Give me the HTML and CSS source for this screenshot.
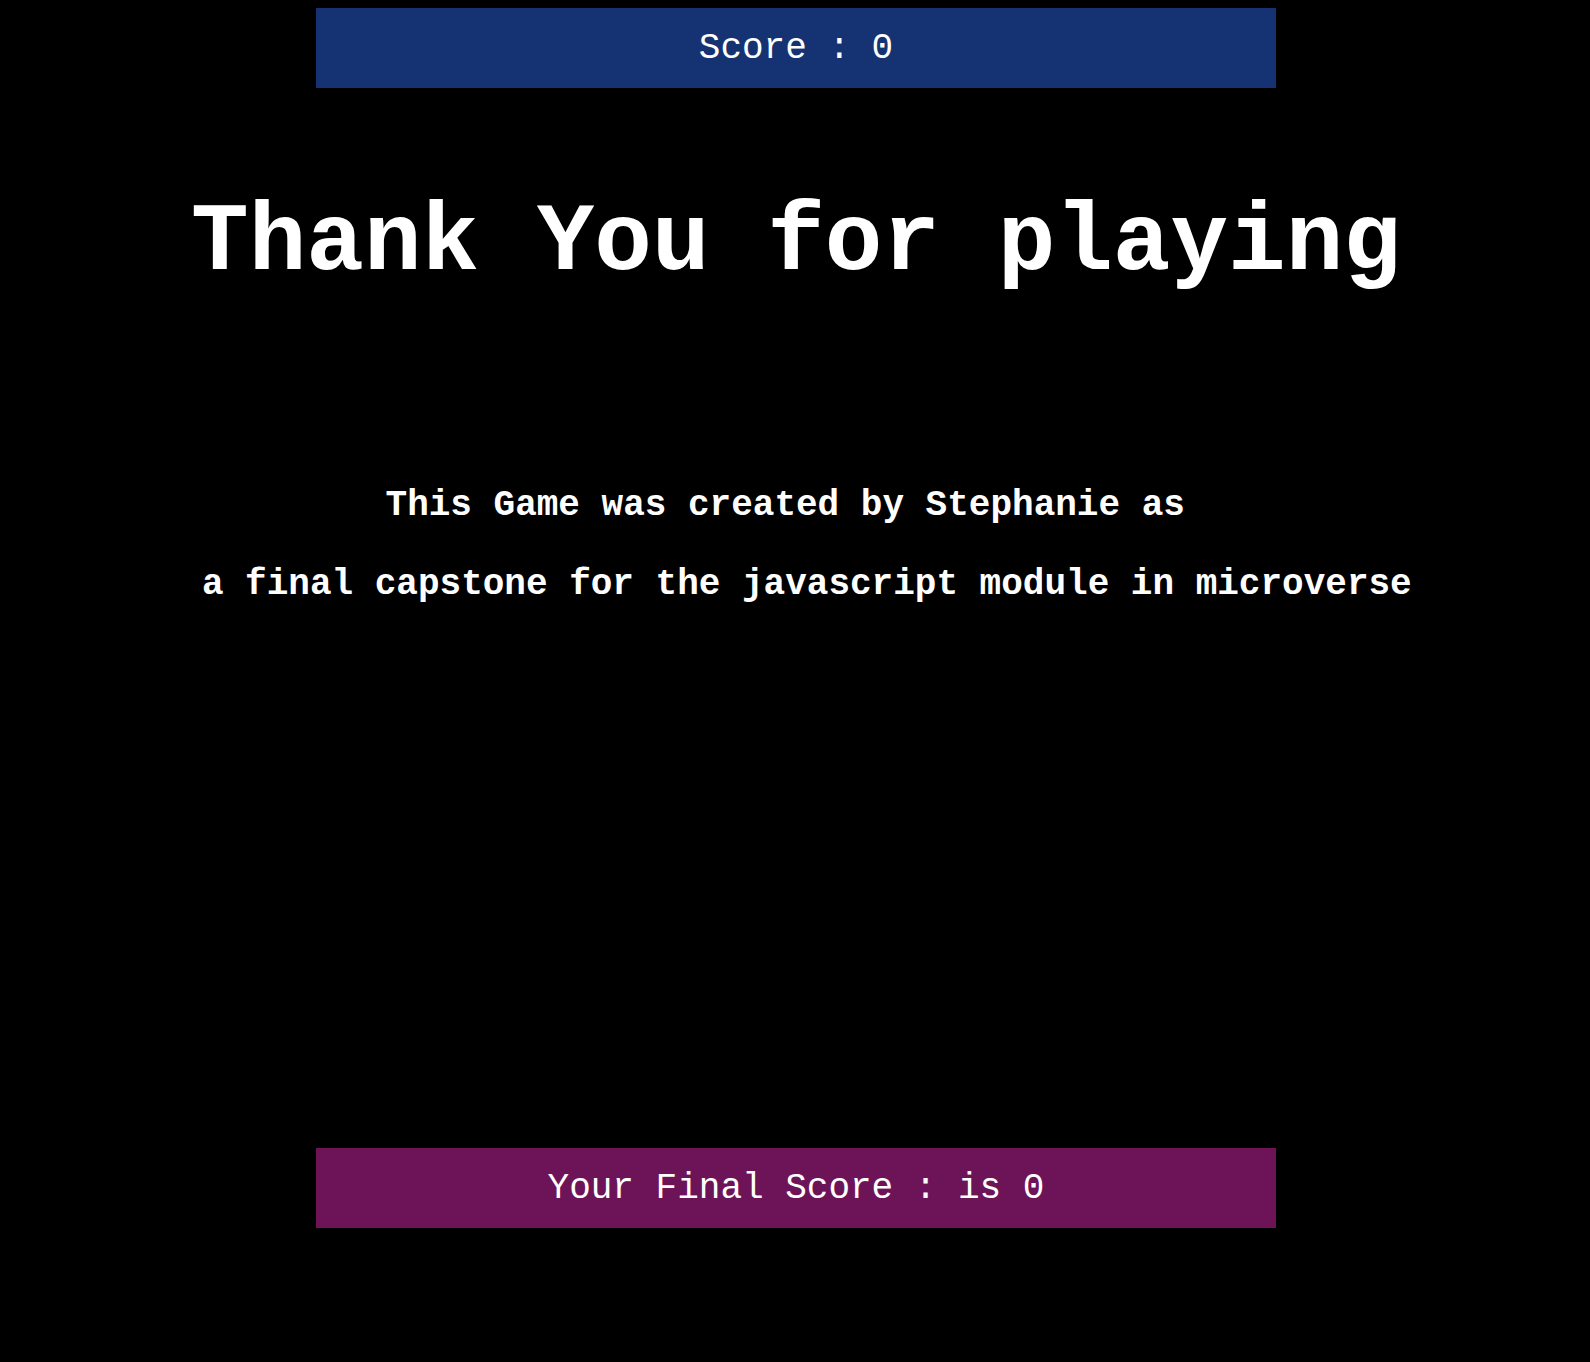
FILE: index.html
```html
<!DOCTYPE html>
<html lang="en">
<head>
<meta charset="utf-8">
<title>Thank You for playing</title>
<link rel="stylesheet" href="styles.css">
</head>
<body>
  <div class="score-bar">Score : 0</div>
  <h1 class="title">Thank You for playing</h1>
  <p class="credit credit-first">This Game was created by Stephanie as</p>
  <p class="credit credit-second">a final capstone for the javascript module in microverse</p>
  <div class="final-bar">Your Final Score : is 0</div>
</body>
</html>
```
FILE: styles.css
```css
html, body {
  background: #000;
}
body {
  margin: 8px 7px 8px 9px;
  color: #fff;
  font-family: "Courier New", "Nimbus Mono PS", "Nimbus Mono L", "FreeMono", "Courier", "Liberation Mono", monospace;
  font-size: 36px;
  line-height: normal;
}
.score-bar,
.final-bar {
  width: 960px;
  height: 80px;
  margin: 0 auto;
  display: flex;
  align-items: center;
  justify-content: center;
  font-size: 36px;
  font-weight: normal;
  white-space: pre;
}
.score-bar {
  background: #153372;
}
.final-bar {
  background: #6d1459;
  margin-top: 543px;
}
.title {
  margin: 101px 0 0;
  font-size: 96px;
  font-weight: bold;
  text-align: center;
  line-height: normal;
}
.credit {
  margin: 0;
  font-size: 36px;
  font-weight: bold;
  text-align: center;
}
.credit-first {
  margin-top: 187px;
  padding-right: 1ch;
}
.credit-second {
  margin-top: 38px;
  padding-left: 1ch;
}
```
